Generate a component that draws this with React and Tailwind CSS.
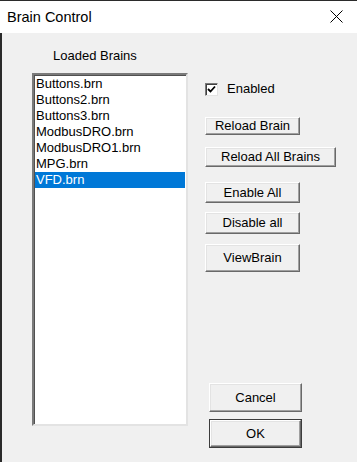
import React, { useState } from 'react';

const brains = ['Buttons.brn', 'Buttons2.brn', 'Buttons3.brn', 'ModbusDRO.brn', 'ModbusDRO1.brn', 'MPG.brn', 'VFD.brn'];

const raised = 'border border-t-white border-l-white border-r-[#696969] border-b-[#696969] shadow-[inset_-1px_-1px_0_#a0a0a0,inset_1px_1px_0_#e3e3e3] bg-[#f0f0f0] text-black flex items-center justify-center';

const WinButton = ({ label, className }) => (
    <button type="button" className={`${raised} ${className}`}>
        {label}
    </button>
);

const App = () => {
    const [selected, setSelected] = useState('VFD.brn');
    const [enabled, setEnabled] = useState(true);

    return (
        <div className="w-[357px] h-[462px] flex flex-col bg-[#f0f0f0] overflow-hidden text-[13px] leading-4 text-black" style={{ fontFamily: '"Liberation Sans", Arial, sans-serif' }}>
            {/* title bar */}
            <div className="h-[33px] shrink-0 bg-white border-t border-[#2b2b2b] flex items-center justify-between pl-[7px] pr-[14px]">
                <span className="text-[14.5px] text-black pb-[1px]">Brain Control</span>
                <svg width="13" height="13" viewBox="0 0 13 13" className="mb-[1px]">
                    <path d="M0.5 0.5 L12.5 12.5 M12.5 0.5 L0.5 12.5" stroke="#000" strokeWidth="1" fill="none" />
                </svg>
            </div>

            <div className="flex-1 flex border-l-2 border-[#2a2a2a]">
                {/* left column */}
                <div className="pl-[30px] pt-[15px] flex flex-col">
                    <div className="pl-[21px] h-4">Loaded Brains</div>
                    <div className="mt-[9px] w-[156px] h-[353px] bg-white border-2 border-t-[#7a7a7a] border-l-[#7a7a7a] border-r-[#e3e3e3] border-b-[#e3e3e3] shadow-[inset_1px_1px_0_#505050] pt-[1px] pl-[1px] pr-[1px]">
                        {brains.map(b => (
                            <div
                                key={b}
                                onClick={() => setSelected(b)}
                                className={`h-4 pl-[1px] flex items-center ${selected === b ? 'bg-[#0078d7] text-white' : ''}`}
                            >
                                {b}
                            </div>
                        ))}
                    </div>
                </div>

                {/* right column */}
                <div className="pl-[17px] pt-[49px] flex flex-col items-start">
                    <label className="flex items-center gap-[9px] h-[14px] cursor-pointer" onClick={() => setEnabled(!enabled)}>
                        <span className="w-[13px] h-[13px] bg-white border border-t-[#7a7a7a] border-l-[#7a7a7a] border-r-[#e3e3e3] border-b-[#e3e3e3] shadow-[inset_1px_1px_0_#404040] flex items-center justify-center">
                            {enabled && (
                                <svg width="9" height="9" viewBox="0 0 9 9">
                                    <path d="M1 4 L3.5 6.5 L8 1.5" stroke="#000" strokeWidth="1.8" fill="none" />
                                </svg>
                            )}
                        </span>
                        <span>Enabled</span>
                    </label>
                    <WinButton label="Reload Brain" className="mt-[21px] w-[95px] h-[18px]" />
                    <WinButton label="Reload All Brains" className="mt-[12px] w-[131px] h-[20px]" />
                    <WinButton label="Enable All" className="mt-[15px] w-[95px] h-[21px]" />
                    <WinButton label="Disable all" className="mt-[9px] w-[95px] h-[22px]" />
                    <WinButton label="ViewBrain" className="mt-[10px] w-[95px] h-[28px]" />

                    <WinButton label="Cancel" className="mt-[111px] ml-[4px] w-[93px] h-[29px]" />
                    <div className="mt-[7px] ml-[4px] border border-[#3c3c3c]">
                        <WinButton label="OK" className="w-[91px] h-[27px]" />
                    </div>
                </div>
            </div>
        </div>
    );
};

export default App;
